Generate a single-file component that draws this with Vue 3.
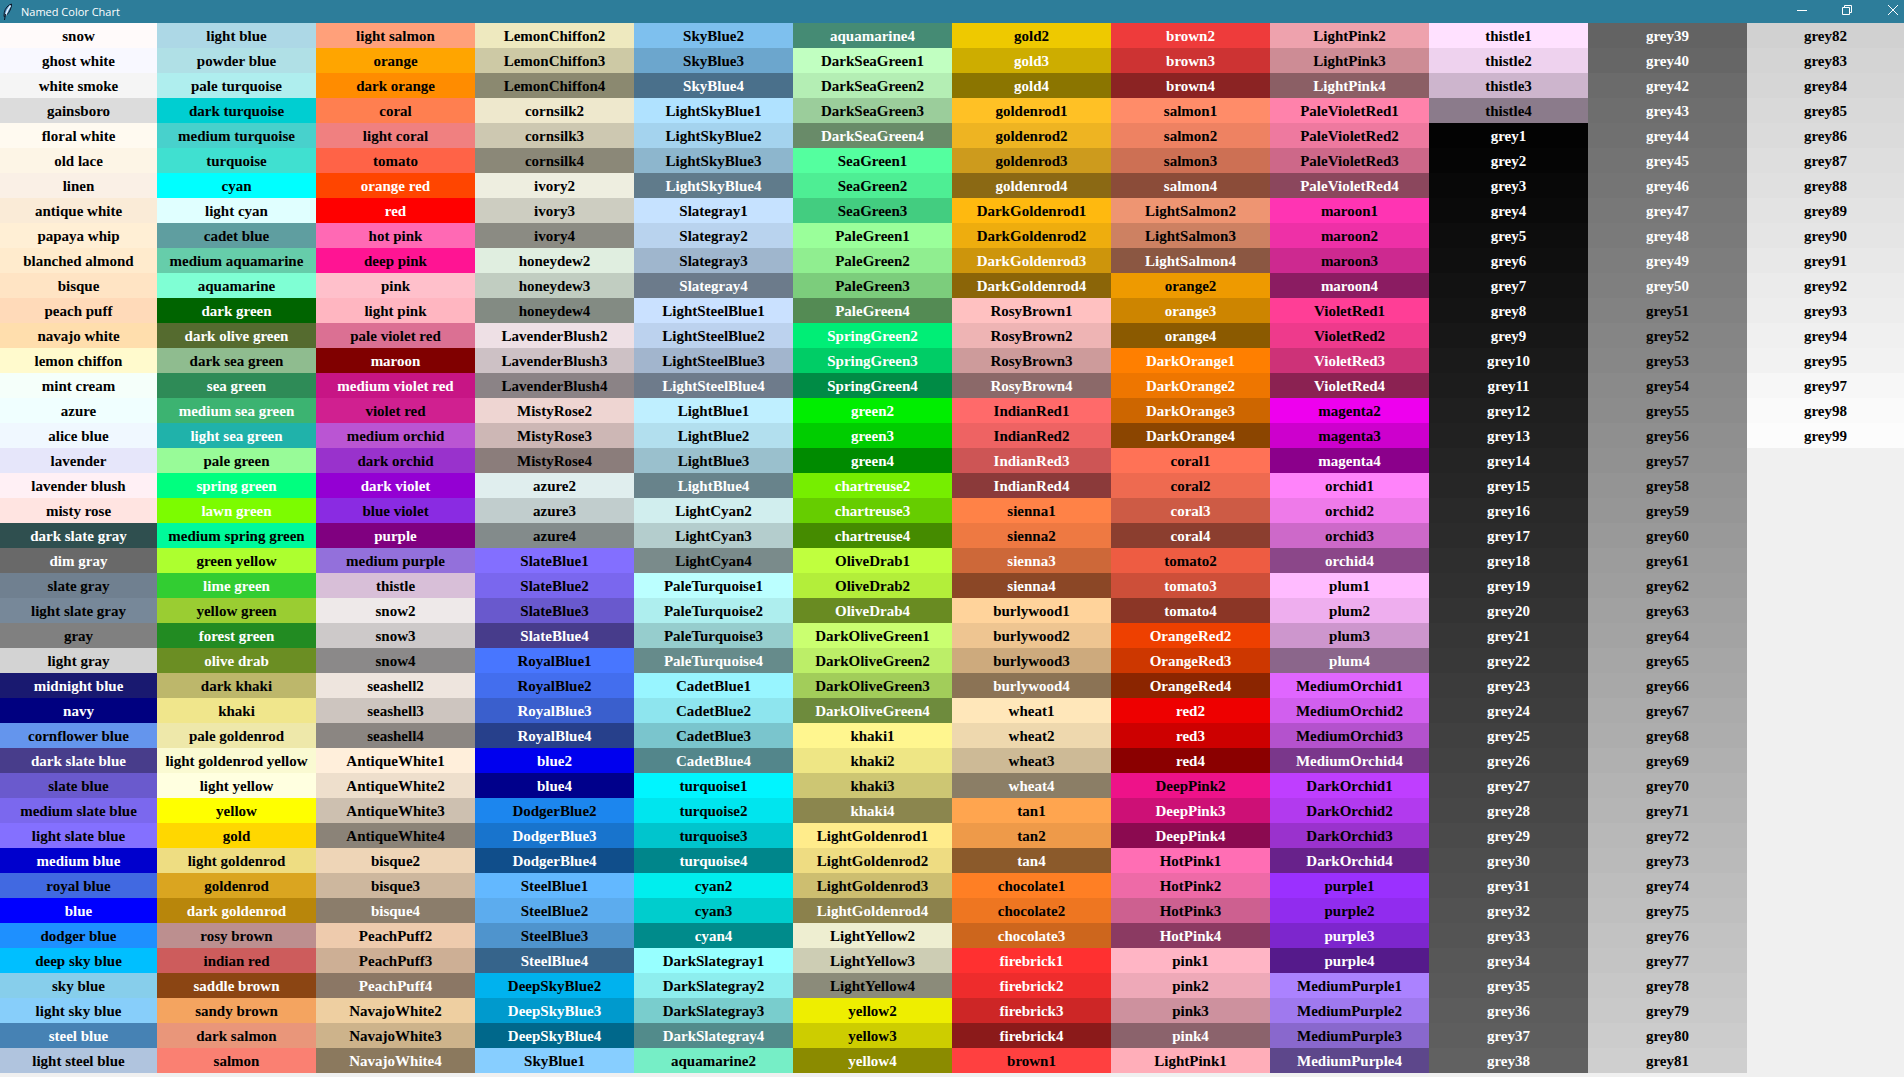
<script setup>
const shades = {
  snow: 'fffafa eee9e9 cdc9c9 8b8989',
  seashell: 'fff5ee eee5de cdc5bf 8b8682',
  AntiqueWhite: 'ffefdb eedfcc cdc0b0 8b8378',
  bisque: 'ffe4c4 eed5b7 cdb79e 8b7d6b',
  PeachPuff: 'ffdab9 eecbad cdaf95 8b7765',
  NavajoWhite: 'ffdead eecfa1 cdb38b 8b795e',
  LemonChiffon: 'fffacd eee9bf cdc9a5 8b8970',
  cornsilk: 'fff8dc eee8cd cdc8b1 8b8878',
  ivory: 'fffff0 eeeee0 cdcdc1 8b8b83',
  honeydew: 'f0fff0 e0eee0 c1cdc1 838b83',
  LavenderBlush: 'fff0f5 eee0e5 cdc1c5 8b8386',
  MistyRose: 'ffe4e1 eed5d2 cdb7b5 8b7d7b',
  azure: 'f0ffff e0eeee c1cdcd 838b8b',
  SlateBlue: '836fff 7a67ee 6959cd 473c8b',
  RoyalBlue: '4876ff 436eee 3a5fcd 27408b',
  blue: '0000ff 0000ee 0000cd 00008b',
  DodgerBlue: '1e90ff 1c86ee 1874cd 104e8b',
  SteelBlue: '63b8ff 5cacee 4f94cd 36648b',
  DeepSkyBlue: '00bfff 00b2ee 009acd 00688b',
  SkyBlue: '87ceff 7ec0ee 6ca6cd 4a708b',
  LightSkyBlue: 'b0e2ff a4d3ee 8db6cd 607b8b',
  Slategray: 'c6e2ff b9d3ee 9fb6cd 6c7b8b',
  LightSteelBlue: 'cae1ff bcd2ee a2b5cd 6e7b8b',
  LightBlue: 'bfefff b2dfee 9ac0cd 68838b',
  LightCyan: 'e0ffff d1eeee b4cdcd 7a8b8b',
  PaleTurquoise: 'bbffff aeeeee 96cdcd 668b8b',
  CadetBlue: '98f5ff 8ee5ee 7ac5cd 53868b',
  turquoise: '00f5ff 00e5ee 00c5cd 00868b',
  cyan: '00ffff 00eeee 00cdcd 008b8b',
  DarkSlategray: '97ffff 8deeee 79cdcd 528b8b',
  aquamarine: '7fffd4 76eec6 66cdaa 458b74',
  DarkSeaGreen: 'c1ffc1 b4eeb4 9bcd9b 698b69',
  SeaGreen: '54ff9f 4eee94 43cd80 2e8b57',
  PaleGreen: '9aff9a 90ee90 7ccd7c 548b54',
  SpringGreen: '00ff7f 00ee76 00cd66 008b45',
  green: '00ff00 00ee00 00cd00 008b00',
  chartreuse: '7fff00 76ee00 66cd00 458b00',
  OliveDrab: 'c0ff3e b3ee3a 9acd32 698b22',
  DarkOliveGreen: 'caff70 bcee68 a2cd5a 6e8b3d',
  khaki: 'fff68f eee685 cdc673 8b864e',
  LightGoldenrod: 'ffec8b eedc82 cdbe70 8b814c',
  LightYellow: 'ffffe0 eeeed1 cdcdb4 8b8b7a',
  yellow: 'ffff00 eeee00 cdcd00 8b8b00',
  gold: 'ffd700 eec900 cdad00 8b7500',
  goldenrod: 'ffc125 eeb422 cd9b1d 8b6914',
  DarkGoldenrod: 'ffb90f eead0e cd950c 8b6508',
  RosyBrown: 'ffc1c1 eeb4b4 cd9b9b 8b6969',
  IndianRed: 'ff6a6a ee6363 cd5555 8b3a3a',
  sienna: 'ff8247 ee7942 cd6839 8b4726',
  burlywood: 'ffd39b eec591 cdaa7d 8b7355',
  wheat: 'ffe7ba eed8ae cdba96 8b7e66',
  tan: 'ffa54f ee9a49 cd853f 8b5a2b',
  chocolate: 'ff7f24 ee7621 cd661d 8b4513',
  firebrick: 'ff3030 ee2c2c cd2626 8b1a1a',
  brown: 'ff4040 ee3b3b cd3333 8b2323',
  salmon: 'ff8c69 ee8262 cd7054 8b4c39',
  LightSalmon: 'ffa07a ee9572 cd8162 8b5742',
  orange: 'ffa500 ee9a00 cd8500 8b5a00',
  DarkOrange: 'ff7f00 ee7600 cd6600 8b4500',
  coral: 'ff7256 ee6a50 cd5b45 8b3e2f',
  tomato: 'ff6347 ee5c42 cd4f39 8b3626',
  OrangeRed: 'ff4500 ee4000 cd3700 8b2500',
  red: 'ff0000 ee0000 cd0000 8b0000',
  DeepPink: 'ff1493 ee1289 cd1076 8b0a50',
  HotPink: 'ff6eb4 ee6aa7 cd6090 8b3a62',
  pink: 'ffb5c5 eea9b8 cd919e 8b636c',
  LightPink: 'ffaeb9 eea2ad cd8c95 8b5f65',
  PaleVioletRed: 'ff82ab ee799f cd6889 8b475d',
  maroon: 'ff34b3 ee30a7 cd2990 8b1c62',
  VioletRed: 'ff3e96 ee3a8c cd3278 8b2252',
  magenta: 'ff00ff ee00ee cd00cd 8b008b',
  orchid: 'ff83fa ee7ae9 cd69c9 8b4789',
  plum: 'ffbbff eeaeee cd96cd 8b668b',
  MediumOrchid: 'e066ff d15fee b452cd 7a378b',
  DarkOrchid: 'bf3eff b23aee 9a32cd 68228b',
  purple: '9b30ff 912cee 7d26cd 551a8b',
  MediumPurple: 'ab82ff 9f79ee 8968cd 5d478b',
  thistle: 'ffe1ff eed2ee cdb5cd 8b7b8b'
}

// Names that CSS does not define
const extras = {
  'light slate blue': '#8470ff',
  'light goldenrod': '#eedd82',
  'violet red': '#d02090'
}

// A trailing asterisk marks a swatch with a white label
const columns = [
  'snow,ghost white,white smoke,gainsboro,floral white,old lace,linen,antique white,papaya whip,blanched almond,bisque,peach puff,navajo white,lemon chiffon,mint cream,azure,alice blue,lavender,lavender blush,misty rose,dark slate gray*,dim gray*,slate gray,light slate gray,gray,light gray,midnight blue*,navy*,cornflower blue,dark slate blue*,slate blue,medium slate blue,light slate blue,medium blue*,royal blue,blue*,dodger blue,deep sky blue,sky blue,light sky blue,steel blue*,light steel blue',
  'light blue,powder blue,pale turquoise,dark turquoise,medium turquoise,turquoise,cyan,light cyan,cadet blue,medium aquamarine,aquamarine,dark green*,dark olive green*,dark sea green,sea green*,medium sea green*,light sea green*,pale green,spring green*,lawn green*,medium spring green,green yellow,lime green*,yellow green,forest green*,olive drab*,dark khaki,khaki,pale goldenrod,light goldenrod yellow,light yellow,yellow,gold,light goldenrod,goldenrod,dark goldenrod*,rosy brown,indian red,saddle brown*,sandy brown,dark salmon,salmon',
  'light salmon,orange,dark orange,coral,light coral,tomato,orange red*,red*,hot pink,deep pink,pink,light pink,pale violet red,maroon*,medium violet red*,violet red,medium orchid,dark orchid,dark violet*,blue violet,purple*,medium purple,thistle,snow2,snow3,snow4,seashell2,seashell3,seashell4,AntiqueWhite1,AntiqueWhite2,AntiqueWhite3,AntiqueWhite4,bisque2,bisque3,bisque4*,PeachPuff2,PeachPuff3,PeachPuff4*,NavajoWhite2,NavajoWhite3,NavajoWhite4*',
  'LemonChiffon2,LemonChiffon3,LemonChiffon4,cornsilk2,cornsilk3,cornsilk4,ivory2,ivory3,ivory4,honeydew2,honeydew3,honeydew4,LavenderBlush2,LavenderBlush3,LavenderBlush4,MistyRose2,MistyRose3,MistyRose4,azure2,azure3,azure4,SlateBlue1,SlateBlue2,SlateBlue3,SlateBlue4*,RoyalBlue1,RoyalBlue2,RoyalBlue3*,RoyalBlue4*,blue2*,blue4*,DodgerBlue2,DodgerBlue3*,DodgerBlue4*,SteelBlue1,SteelBlue2,SteelBlue3,SteelBlue4*,DeepSkyBlue2,DeepSkyBlue3*,DeepSkyBlue4*,SkyBlue1',
  'SkyBlue2,SkyBlue3,SkyBlue4*,LightSkyBlue1,LightSkyBlue2,LightSkyBlue3,LightSkyBlue4*,Slategray1,Slategray2,Slategray3,Slategray4*,LightSteelBlue1,LightSteelBlue2,LightSteelBlue3,LightSteelBlue4*,LightBlue1,LightBlue2,LightBlue3,LightBlue4*,LightCyan2,LightCyan3,LightCyan4,PaleTurquoise1,PaleTurquoise2,PaleTurquoise3,PaleTurquoise4*,CadetBlue1,CadetBlue2,CadetBlue3,CadetBlue4*,turquoise1,turquoise2,turquoise3,turquoise4*,cyan2,cyan3,cyan4*,DarkSlategray1,DarkSlategray2,DarkSlategray3,DarkSlategray4*,aquamarine2',
  'aquamarine4*,DarkSeaGreen1,DarkSeaGreen2,DarkSeaGreen3,DarkSeaGreen4*,SeaGreen1,SeaGreen2,SeaGreen3,PaleGreen1,PaleGreen2,PaleGreen3,PaleGreen4*,SpringGreen2*,SpringGreen3*,SpringGreen4*,green2*,green3*,green4*,chartreuse2*,chartreuse3*,chartreuse4*,OliveDrab1,OliveDrab2,OliveDrab4*,DarkOliveGreen1,DarkOliveGreen2,DarkOliveGreen3,DarkOliveGreen4*,khaki1,khaki2,khaki3,khaki4*,LightGoldenrod1,LightGoldenrod2,LightGoldenrod3,LightGoldenrod4*,LightYellow2,LightYellow3,LightYellow4,yellow2,yellow3,yellow4*',
  'gold2,gold3*,gold4*,goldenrod1,goldenrod2,goldenrod3,goldenrod4*,DarkGoldenrod1,DarkGoldenrod2,DarkGoldenrod3*,DarkGoldenrod4*,RosyBrown1,RosyBrown2,RosyBrown3,RosyBrown4*,IndianRed1,IndianRed2,IndianRed3*,IndianRed4*,sienna1,sienna2,sienna3*,sienna4*,burlywood1,burlywood2,burlywood3,burlywood4*,wheat1,wheat2,wheat3,wheat4*,tan1,tan2,tan4*,chocolate1,chocolate2,chocolate3*,firebrick1*,firebrick2*,firebrick3*,firebrick4*,brown1',
  'brown2*,brown3*,brown4*,salmon1,salmon2,salmon3,salmon4*,LightSalmon2,LightSalmon3,LightSalmon4*,orange2,orange3*,orange4*,DarkOrange1*,DarkOrange2*,DarkOrange3*,DarkOrange4*,coral1,coral2,coral3*,coral4*,tomato2,tomato3*,tomato4*,OrangeRed2*,OrangeRed3*,OrangeRed4*,red2*,red3*,red4*,DeepPink2,DeepPink3*,DeepPink4*,HotPink1,HotPink2,HotPink3,HotPink4*,pink1,pink2,pink3,pink4*,LightPink1',
  'LightPink2,LightPink3,LightPink4*,PaleVioletRed1,PaleVioletRed2,PaleVioletRed3,PaleVioletRed4*,maroon1,maroon2,maroon3,maroon4*,VioletRed1,VioletRed2,VioletRed3*,VioletRed4*,magenta2,magenta3,magenta4*,orchid1,orchid2,orchid3,orchid4*,plum1,plum2,plum3,plum4*,MediumOrchid1,MediumOrchid2,MediumOrchid3,MediumOrchid4*,DarkOrchid1,DarkOrchid2,DarkOrchid3,DarkOrchid4*,purple1,purple2,purple3*,purple4*,MediumPurple1,MediumPurple2,MediumPurple3,MediumPurple4*'
].map((list) => list.split(',').map(toSwatch))

const greys = (from, to) =>
  Array.from({ length: to - from + 1 }, (_, i) => from + i)
    .filter((n) => n !== 41 && n !== 96)
    .map((n) => toSwatch(`grey${n}${n <= 50 ? '*' : ''}`))

columns.push(
  [...['thistle1', 'thistle2', 'thistle3', 'thistle4'].map(toSwatch), ...greys(1, 38)],
  greys(39, 81),
  greys(82, 99)
)

function toSwatch(entry) {
  const name = entry.replace('*', '')
  return { name, fill: fillOf(name), light: entry.endsWith('*') }
}

function fillOf(name) {
  const [, family, number] = name.match(/^(\D+)(\d*)$/)
  if (family === 'grey') {
    const level = Math.round(number * 2.55)
    return `rgb(${level}, ${level}, ${level})`
  }
  if (number) return '#' + shades[family].split(' ')[number - 1]
  return extras[name] || name.replaceAll(' ', '')
}
</script>

<template>
  <div class="window">
    <header class="titlebar">
      <svg class="feather" width="16" height="18" viewBox="0 0 16 18" aria-hidden="true">
        <path d="M11.500 1C8 2 5 5.500 4.300 9.500L4 13.500 6.500 12C9.500 9.500 11.500 5 11.500 1Z" fill="#4f8fc0" stroke="#0b1424" stroke-width="1" />
        <path d="M10.500 2.500C8.500 5 6.500 9 5.500 12.500" fill="none" stroke="#e8f4ff" stroke-width="1.500" />
        <path d="M5.500 11L4.500 17" fill="none" stroke="#0b1424" stroke-width="1" />
      </svg>
      <h1 class="title">Named Color Chart</h1>
      <div class="controls">
        <button type="button" aria-label="Minimize">
          <svg width="12" height="12" viewBox="0 0 12 12"><path d="M2 6.500H12" /></svg>
        </button>
        <button type="button" aria-label="Restore">
          <svg width="12" height="12" viewBox="0 0 12 12"><path d="M1.500 3.500H8.500V10.500H1.500ZM3.500 3.500V1.500H10.500V8.500H8.500" /></svg>
        </button>
        <button type="button" aria-label="Close">
          <svg width="12" height="12" viewBox="0 0 12 12"><path d="M1 1L11 11M11 1L1 11" /></svg>
        </button>
      </div>
    </header>
    <main class="chart">
      <ul v-for="(column, i) in columns" :key="i" class="column">
        <li
          v-for="swatch in column"
          :key="swatch.name"
          class="swatch"
          :class="{ light: swatch.light }"
          :style="{ backgroundColor: swatch.fill }"
        >{{ swatch.name }}</li>
      </ul>
    </main>
  </div>
</template>

<style>
body {
  margin: 0;
  background: #f0f0f0;
}
</style>

<style scoped>
.window {
  min-height: 100vh;
  background: #f0f0f0;
}

.titlebar {
  display: flex;
  align-items: center;
  height: 23px;
  background: #2d7d9a;
  color: #fff;
}

.feather {
  flex: none;
}

.title {
  flex: 1;
  margin: 0 0 0 5px;
  font: 400 11px/23px "Open Sans", "Noto Sans", sans-serif;
}

.controls {
  display: flex;
  align-self: flex-start;
  height: 20px;
}

.controls button {
  display: flex;
  align-items: center;
  justify-content: center;
  width: 46px;
  padding: 0;
  border: 0;
  background: none;
  color: inherit;
}

.controls button:last-child {
  width: 22px;
  margin-left: 12px;
}

.controls svg {
  fill: none;
  stroke: currentColor;
  stroke-width: 1;
}

.chart {
  display: grid;
  grid-template-columns: 157fr repeat(10, 159fr) 157fr;
}

.column {
  min-width: 0;
  margin: 0;
  padding: 0;
  list-style: none;
}

.swatch {
  height: 25px;
  overflow: hidden;
  color: #000;
  font: 700 15px/26px "Liberation Serif", "Times New Roman", serif;
  text-align: center;
  white-space: nowrap;
}

.swatch.light {
  color: #fff;
}
</style>
